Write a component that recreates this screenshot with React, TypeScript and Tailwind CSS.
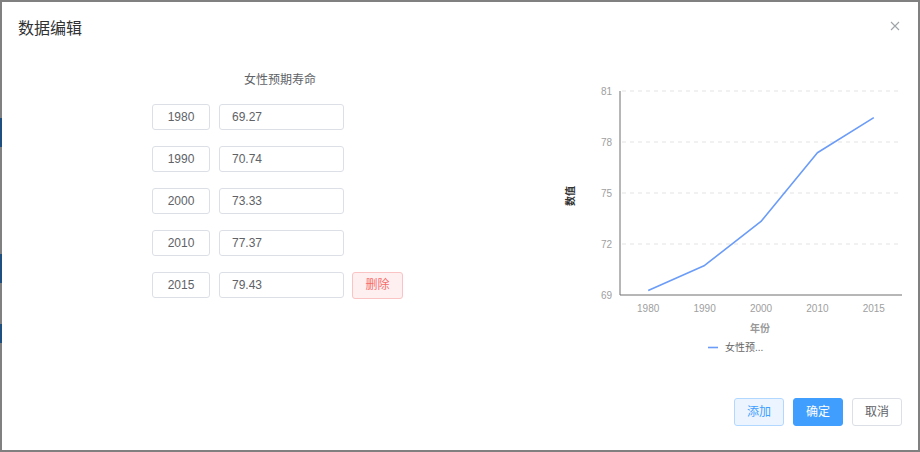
import React from 'react';

// ---------------------------------------------------------------------------
// Data
// ---------------------------------------------------------------------------

const rows = [
  { year: '1980', value: '69.27' },
  { year: '1990', value: '70.74' },
  { year: '2000', value: '73.33' },
  { year: '2010', value: '77.37' },
  { year: '2015', value: '79.43' },
];

const FONT = '"Liberation Sans", "Noto Sans CJK SC", sans-serif';

// chart geometry (svg coords)
const X0 = 60;
const X1 = 342;
const YTOP = 11;
const YBOT = 215;
const MIN = 69;
const MAX = 81;

function yOf(v: number) {
  return YBOT - ((v - MIN) / (MAX - MIN)) * (YBOT - YTOP);
}

function xOf(i: number) {
  const step = (X1 - X0) / rows.length;
  return X0 + step * (i + 0.5);
}

// ---------------------------------------------------------------------------
// Chart
// ---------------------------------------------------------------------------

function LineChart() {
  const ticks = [81, 78, 75, 72, 69];
  const points = rows.map((r, i) => `${xOf(i)},${yOf(parseFloat(r.value))}`).join(' ');

  return (
    <svg width="358" height="280" viewBox="0 0 358 280" style={{ fontFamily: FONT }}>
      {/* grid */}
      {ticks.map((t) =>
        t === MIN ? null : (
          <line
            key={t}
            x1={X0 + 2}
            x2={X1}
            y1={yOf(t)}
            y2={yOf(t)}
            stroke="#e3e3e3"
            strokeDasharray="4 4"
          />
        ),
      )}
      {/* axes */}
      <line x1={X0} x2={X0} y1={YTOP} y2={YBOT} stroke="#6e6e6e" />
      <line x1={X0} x2={X1} y1={YBOT} y2={YBOT} stroke="#6e6e6e" />

      {ticks.map((t) => (
        <text key={t} x={X0 - 8} y={yOf(t) + 3.5} fontSize="10" fill="#a0a0a0" textAnchor="end">
          {t}
        </text>
      ))}
      {rows.map((r, i) => (
        <text key={r.year} x={xOf(i)} y={YBOT + 17} fontSize="10" fill="#a0a0a0" textAnchor="middle">
          {r.year}
        </text>
      ))}

      <polyline points={points} fill="none" stroke="#6b9cf7" strokeWidth="1.6" strokeLinejoin="round" />

      {/* axis titles */}
      <text
        x={14}
        y={116}
        fontSize="10"
        fontWeight="bold"
        fill="#333"
        textAnchor="middle"
        transform="rotate(-90 14 116)"
      >
        数值
      </text>
      <text x={200} y={252} fontSize="10" fontWeight="bold" fill="#999" textAnchor="middle">
        年份
      </text>

      {/* legend */}
      <line x1={148} x2={158} y1={267.5} y2={267.5} stroke="#6b9cf7" strokeWidth="1.6" />
      <text x={165} y={271} fontSize="10" fill="#666">
        女性预...
      </text>
    </svg>
  );
}

// ---------------------------------------------------------------------------
// App
// ---------------------------------------------------------------------------

export default function App() {
  return (
    <div
      className="relative h-[452px] w-[920px] overflow-hidden bg-[#808080]"
      style={{ fontFamily: FONT }}
    >
      {/* page bits peeking out behind the overlay */}
      <div className="absolute left-0 top-[118px] h-[29px] w-[2px] bg-[#1f4f7f]" />
      <div className="absolute left-0 top-[254px] h-[29px] w-[2px] bg-[#1f4f7f]" />
      <div className="absolute left-0 top-[324px] h-[19px] w-[2px] bg-[#1f4f7f]" />

      {/* dialog */}
      <div className="absolute left-[2px] top-[2px] flex h-[448px] w-[916px] flex-col bg-white">
        <div className="flex h-[54px] items-center px-[16px] text-[16px] text-[#303133]">数据编辑</div>
        <button
          type="button"
          className="absolute right-[17px] top-[18px] flex h-[12px] w-[12px] items-center justify-center"
        >
          <svg width="10" height="10" viewBox="0 0 10 10">
            <path d="M1 1L9 9M9 1L1 9" stroke="#a0a3a8" strokeWidth="1.1" />
          </svg>
        </button>

        <div className="flex">
          <div className="w-[558px] shrink-0 pl-[150px]">
            <div className="mt-[16px] w-[256px] text-center text-[12px] leading-[16px] text-[#606266]">
              女性预期寿命
            </div>
            <div className="mt-[16px] flex flex-col gap-[16px]">
              {rows.map((r, i) => (
                <div key={r.year} className="flex h-[26px] items-center">
                  <div className="flex h-[26px] w-[58px] items-center justify-center rounded-[3px] border border-[#dcdfe6] text-[12px] text-[#606266]">
                    {r.year}
                  </div>
                  <div className="ml-[9px] flex h-[26px] w-[125px] items-center rounded-[3px] border border-[#dcdfe6] pl-[12px] text-[12px] text-[#606266]">
                    {r.value}
                  </div>
                  {i === rows.length - 1 && (
                    <button
                      type="button"
                      className="ml-[8px] flex h-[27px] w-[51px] items-center justify-center rounded-[3px] border border-[#fbc4c4] bg-[#fef0f0] text-[12px] text-[#f56c6c]"
                    >
                      删除
                    </button>
                  )}
                </div>
              ))}
            </div>
          </div>
          <div className="mt-[24px] shrink-0">
            <LineChart />
          </div>
        </div>

        <div className="mt-auto flex justify-end gap-[9px] pb-[24px] pr-[16px]">
          <button
            type="button"
            className="flex h-[28px] w-[50px] items-center justify-center rounded-[3px] border border-[#b3d8ff] bg-[#ecf5ff] text-[12px] text-[#409eff]"
          >
            添加
          </button>
          <button
            type="button"
            className="flex h-[28px] w-[50px] items-center justify-center rounded-[3px] border border-[#409eff] bg-[#409eff] text-[12px] text-white"
          >
            确定
          </button>
          <button
            type="button"
            className="flex h-[28px] w-[50px] items-center justify-center rounded-[3px] border border-[#dcdfe6] bg-white text-[12px] text-[#606266]"
          >
            取消
          </button>
        </div>
      </div>
    </div>
  );
}
